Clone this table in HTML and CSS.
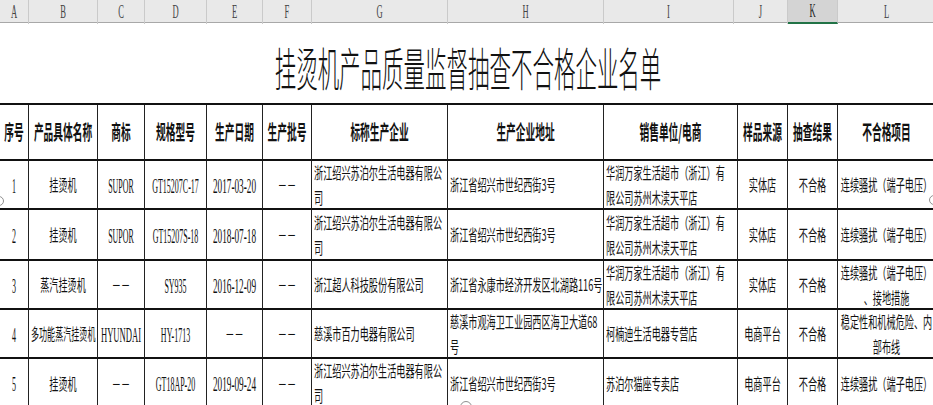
FILE: index.html
```html
<!DOCTYPE html>
<html lang="zh-CN">
<head>
<meta charset="utf-8">
<title>挂烫机产品质量监督抽查不合格企业名单</title>
<link rel="stylesheet" href="styles.css">
</head>
<body>
<div class="sheet">
  <div class="colbar">
    <div class="ch"><span class="t">A</span></div>
    <div class="ch"><span class="t">B</span></div>
    <div class="ch"><span class="t">C</span></div>
    <div class="ch"><span class="t">D</span></div>
    <div class="ch"><span class="t">E</span></div>
    <div class="ch"><span class="t">F</span></div>
    <div class="ch"><span class="t">G</span></div>
    <div class="ch"><span class="t">H</span></div>
    <div class="ch"><span class="t">I</span></div>
    <div class="ch"><span class="t">J</span></div>
    <div class="ch sel"><span class="t">K</span></div>
    <div class="ch"><span class="t">L</span></div>
  </div>

  <div class="title"><span class="t">挂烫机产品质量监督抽查不合格企业名单</span></div>

  <div class="grid">
    <div class="c h"><span class="t">序号</span></div>
    <div class="c h"><span class="t">产品具体名称</span></div>
    <div class="c h"><span class="t">商标</span></div>
    <div class="c h"><span class="t">规格型号</span></div>
    <div class="c h"><span class="t">生产日期</span></div>
    <div class="c h"><span class="t">生产批号</span></div>
    <div class="c h"><span class="t">标称生产企业</span></div>
    <div class="c h"><span class="t">生产企业地址</span></div>
    <div class="c h"><span class="t">销售单位/电商</span></div>
    <div class="c h"><span class="t">样品来源</span></div>
    <div class="c h"><span class="t">抽查结果</span></div>
    <div class="c h"><span class="t">不合格项目</span></div>

    <div class="c n"><span class="t">1</span></div>
    <div class="c"><span class="t">挂烫机</span></div>
    <div class="c n"><span class="t">SUPOR</span></div>
    <div class="c n"><span class="t">GT15207C-17</span></div>
    <div class="c n d"><span class="t">2017-03-20</span></div>
    <div class="c"><span class="t">－－</span></div>
    <div class="c l"><span class="t">浙江绍兴苏泊尔生活电器有限公<br>司</span></div>
    <div class="c l"><span class="t">浙江省绍兴市世纪西街3号</span></div>
    <div class="c l"><span class="t">华润万家生活超市（浙江）有<br>限公司苏州木渎天平店</span></div>
    <div class="c"><span class="t">实体店</span></div>
    <div class="c"><span class="t">不合格</span></div>
    <div class="c"><span class="t">连续骚扰（端子电压）</span></div>

    <div class="c n"><span class="t">2</span></div>
    <div class="c"><span class="t">挂烫机</span></div>
    <div class="c n"><span class="t">SUPOR</span></div>
    <div class="c n"><span class="t">GT15207S-18</span></div>
    <div class="c n d"><span class="t">2018-07-18</span></div>
    <div class="c"><span class="t">－－</span></div>
    <div class="c l"><span class="t">浙江绍兴苏泊尔生活电器有限公<br>司</span></div>
    <div class="c l"><span class="t">浙江省绍兴市世纪西街3号</span></div>
    <div class="c l"><span class="t">华润万家生活超市（浙江）有<br>限公司苏州木渎天平店</span></div>
    <div class="c"><span class="t">实体店</span></div>
    <div class="c"><span class="t">不合格</span></div>
    <div class="c"><span class="t">连续骚扰（端子电压）</span></div>

    <div class="c n"><span class="t">3</span></div>
    <div class="c"><span class="t">蒸汽挂烫机</span></div>
    <div class="c"><span class="t">－－</span></div>
    <div class="c n"><span class="t">SY935</span></div>
    <div class="c n d"><span class="t">2016-12-09</span></div>
    <div class="c"><span class="t">－－</span></div>
    <div class="c l"><span class="t">浙江超人科技股份有限公司</span></div>
    <div class="c l"><span class="t">浙江省永康市经济开发区北湖路116号</span></div>
    <div class="c l"><span class="t">华润万家生活超市（浙江）有<br>限公司苏州木渎天平店</span></div>
    <div class="c"><span class="t">实体店</span></div>
    <div class="c"><span class="t">不合格</span></div>
    <div class="c"><span class="t">连续骚扰（端子电压）<br>、接地措施</span></div>

    <div class="c n"><span class="t">4</span></div>
    <div class="c k"><span class="t">多功能蒸汽挂烫机</span></div>
    <div class="c n w"><span class="t">HYUNDAI</span></div>
    <div class="c n"><span class="t">HY-1713</span></div>
    <div class="c"><span class="t">－－</span></div>
    <div class="c"><span class="t">－－</span></div>
    <div class="c l"><span class="t">慈溪市百力电器有限公司</span></div>
    <div class="c l"><span class="t">慈溪市观海卫工业园西区海卫大道68<br>号</span></div>
    <div class="c l"><span class="t">柯楠迪生活电器专营店</span></div>
    <div class="c"><span class="t">电商平台</span></div>
    <div class="c"><span class="t">不合格</span></div>
    <div class="c"><span class="t">稳定性和机械危险、内<br>部布线</span></div>

    <div class="c n"><span class="t">5</span></div>
    <div class="c"><span class="t">挂烫机</span></div>
    <div class="c"><span class="t">－－</span></div>
    <div class="c n"><span class="t">GT18AP-20</span></div>
    <div class="c n d"><span class="t">2019-09-24</span></div>
    <div class="c"><span class="t">－－</span></div>
    <div class="c l"><span class="t">浙江绍兴苏泊尔生活电器有限公<br>司</span></div>
    <div class="c l"><span class="t">浙江省绍兴市世纪西街3号</span></div>
    <div class="c l"><span class="t">苏泊尔猫座专卖店</span></div>
    <div class="c"><span class="t">电商平台</span></div>
    <div class="c"><span class="t">不合格</span></div>
    <div class="c"><span class="t">连续骚扰（端子电压）</span></div>
  </div>

  <span class="handle h-left"></span>
  <span class="handle h-right"></span>
  <span class="handle h-bottom"></span>
</div>
</body>
</html>
```

FILE: styles.css
```css
* { box-sizing: border-box; }

html, body {
  margin: 0;
  padding: 0;
  background: #fff;
  overflow: hidden;
}

body {
  width: 933px;
  height: 405px;
}

.sheet {
  position: relative;
  width: 936px;
  font-family: "Noto Sans CJK SC", "Noto Sans", sans-serif;
  color: #111;
}

/* horizontally condensed text, like the squeezed spreadsheet capture */
.t {
  flex: none;
  display: block;
  width: calc(100% / var(--s));
  transform: scaleX(var(--s));
  transform-origin: 0 50%;
  white-space: nowrap;
}

/* spreadsheet column letters */
.colbar {
  display: grid;
  grid-template-columns: 29px 69px 47px 62px 56px 49px 136px 156px 130px 54px 50px 98px;
  height: 23px;
  background: #e9e9e9;
  border-bottom: 1px solid #a8a8a8;
}

.ch {
  --s: 0.45;
  display: flex;
  align-items: center;
  border-right: 1px solid #cacaca;
  font-family: "Liberation Serif", serif;
  font-size: 19px;
  line-height: 22px;
  color: #454545;
  text-align: center;
}

.ch.sel {
  background: #d4d4d4;
  border-bottom: 2px solid #217346;
  color: #262626;
}

/* title row */
.title {
  --s: 0.467;
  height: 80px;
  display: flex;
  align-items: center;
  padding-top: 6px;
  font-size: 46px;
  font-weight: 300;
  line-height: 1;
  text-align: center;
  color: #111;
}

/* data table */
.grid {
  display: grid;
  grid-template-columns: 29px 69px 47px 62px 56px 49px 136px 156px 134px 50px 50px 98px;
  grid-template-rows: 56px 49px 51px 49px 49px 50px;
  border-top: 2px solid #111;
}

.c {
  --s: 0.59;
  display: flex;
  align-items: center;
  overflow: hidden;
  padding: 0 2px;
  border-right: 1px solid #222;
  border-bottom: 2px solid #111;
  font-size: 15.5px;
  line-height: 25px;
  text-align: center;
}

.c.l { text-align: left; }

.c.h {
  --s: 0.485;
  font-size: 20px;
  font-weight: 700;
  line-height: 1.2;
}

.c.n {
  --s: 0.38;
  font-family: "Liberation Serif", serif;
  font-size: 21px;
  padding-top: 3px;
}

.c.n.d { --s: 0.44; }
.c.n.w { --s: 0.41; }

.c.k { --s: 0.52; }

/* picture selection handles */
.handle {
  position: absolute;
  width: 10px;
  height: 10px;
  border: 1.5px solid #8f8f8f;
  border-radius: 50%;
  background: #fff;
}

.h-left { left: -6px; top: 196px; }
.h-right { left: 929px; top: 195px; }
.h-bottom { left: 460px; top: 401px; width: 12px; height: 12px; }
```
